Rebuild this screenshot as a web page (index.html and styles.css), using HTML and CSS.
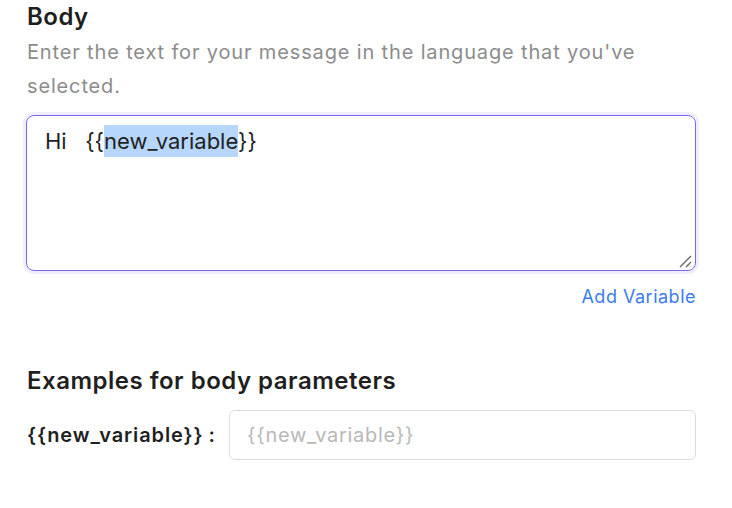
FILE: index.html
```html
<!DOCTYPE html>
<html>
<head>
<meta charset="utf-8">
<link rel="stylesheet" href="styles.css">
</head>
<body>
<div class="page">
  <h2 class="title">Body</h2>
  <p class="desc">Enter the text for your message in the language that you've selected.</p>
  <div class="editor">
    <div class="editor-text">Hi&nbsp;&nbsp; {{<span class="sel">new_variable</span>}}</div>
    <svg class="grip" width="14" height="14" viewBox="0 0 14 14"><path d="M13 2 L2 13 M13 8 L8 13" stroke="#666" stroke-width="1.4" fill="none"/></svg>
  </div>
  <div class="actions"><a class="add-link">Add Variable</a></div>
  <h3 class="subtitle">Examples for body parameters</h3>
  <div class="param-row">
    <span class="param-label">{{new_variable}}</span><span class="colon">:</span>
    <div class="param-input">{{new_variable}}</div>
  </div>
</div>
</body>
</html>
```
FILE: styles.css
```css
* { box-sizing: border-box; }
body {
  margin: 0;
  background: #fff;
  font-family: Inter, "Noto Sans", sans-serif;
  color: #1f1f1f;
}
.page {
  width: 696px;
  padding: 0 0 0 27px;
}
.title {
  margin: 0;
  padding-top: 2px;
  font-size: 24px;
  line-height: 30px;
  font-weight: 600;
  letter-spacing: 0.5px;
}
.desc {
  margin: 3px 0 0;
  font-size: 20px;
  line-height: 34px;
  letter-spacing: 0.85px;
  color: #8c8c8c;
}
.editor {
  position: relative;
  margin-top: 12px;
  margin-left: -1px;
  height: 156px;
  border: 1px solid #7a69ef;
  border-radius: 8px;
  box-shadow: 0 0 0 3px #f0eefd;
  padding: 9px 18px;
}
.editor-text {
  font-size: 22px;
  line-height: 33px;
  color: #1f1f1f;
}
.sel {
  background: #b7d6fb;
  padding: 3px 0;
}
.grip {
  position: absolute;
  right: 3px;
  bottom: 2px;
}
.actions {
  display: flex;
  justify-content: flex-end;
  margin-top: 15px;
}
.add-link {
  font-size: 18px;
  line-height: 22px;
  letter-spacing: 0.5px;
  color: #3b7cf0;
}
.subtitle {
  margin: 58px 0 0;
  font-size: 24px;
  line-height: 30px;
  font-weight: 600;
  letter-spacing: 0.5px;
}
.param-row {
  display: flex;
  align-items: center;
  margin-top: 14px;
}
.param-label {
  font-size: 20px;
  font-weight: 600;
  letter-spacing: 0.9px;
}
.colon {
  font-size: 20px;
  font-weight: 600;
  margin-left: 5px;
  margin-right: 14px;
}
.param-input {
  flex: 1;
  height: 50px;
  border: 1px solid #dcdcdc;
  border-radius: 6px;
  padding: 0 17px;
  display: flex;
  align-items: center;
  font-size: 20px;
  letter-spacing: 0.7px;
  color: #b8b8b8;
}
```
